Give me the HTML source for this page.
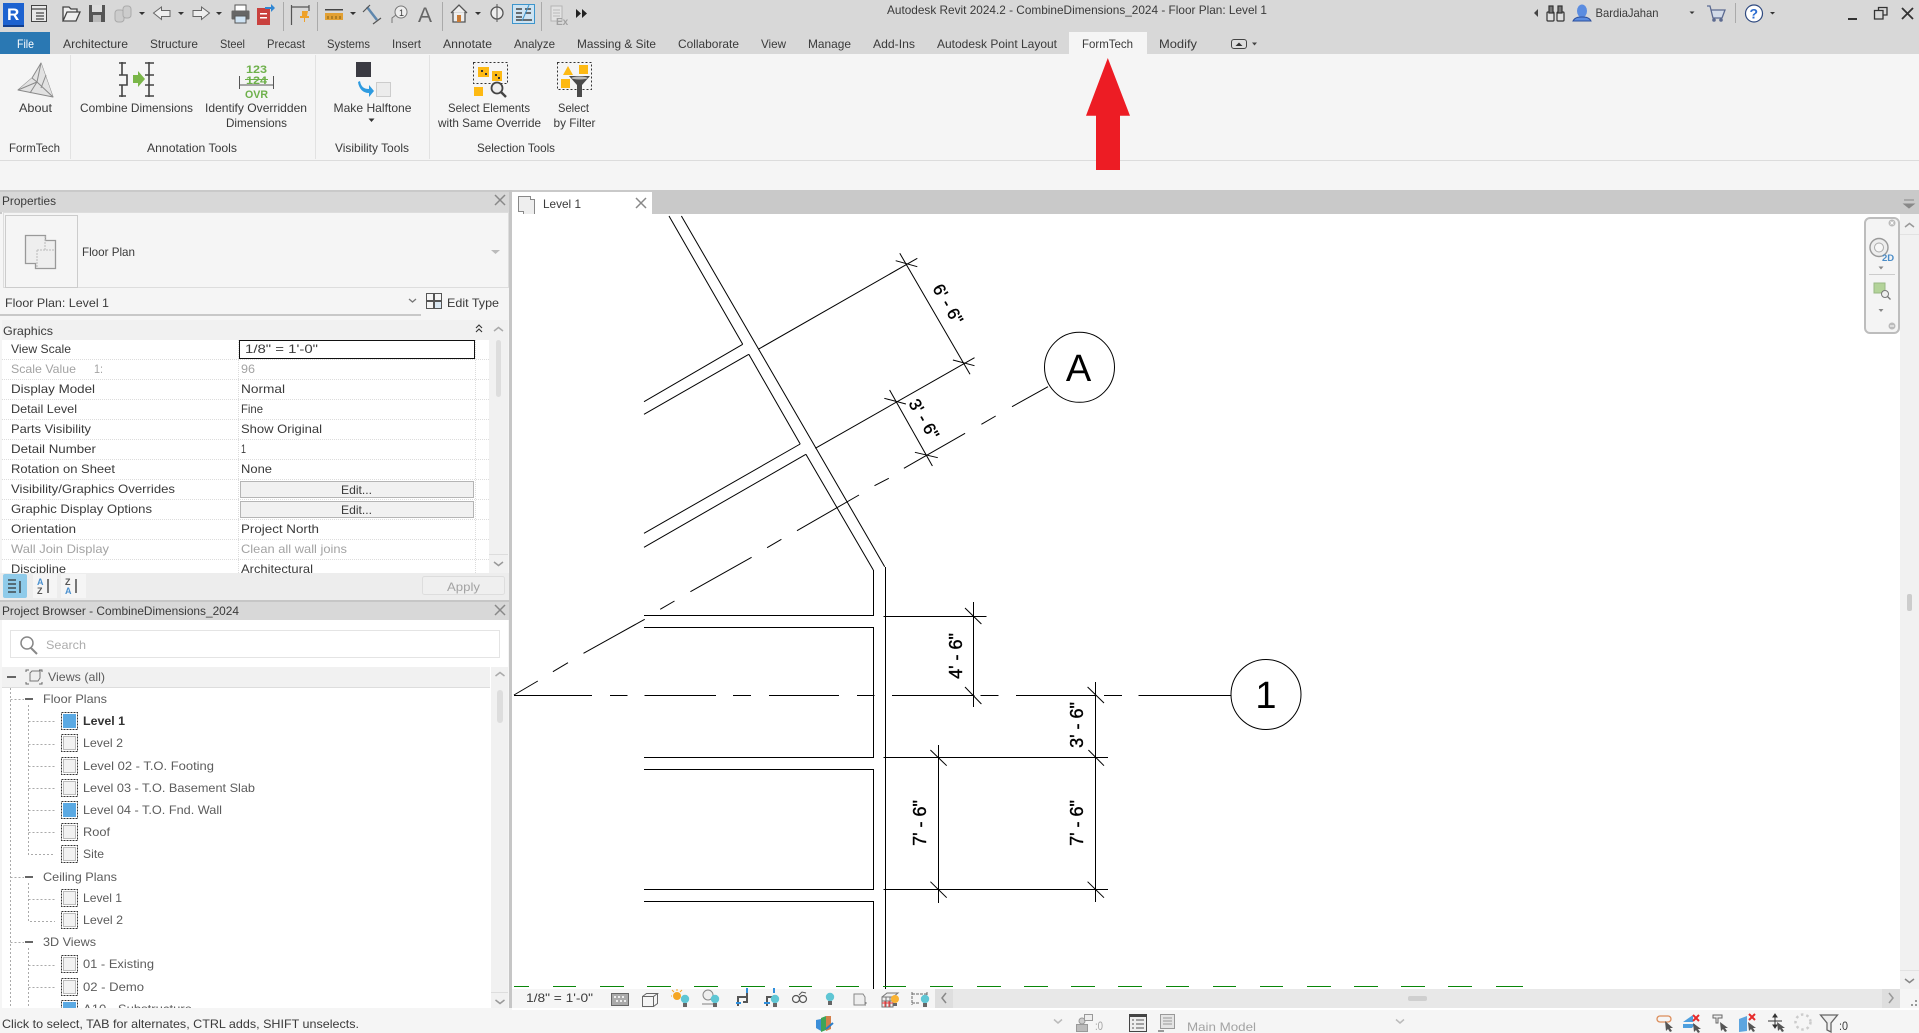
<!DOCTYPE html>
<html><head><meta charset="utf-8"><title>Autodesk Revit 2024.2</title>
<style>
html,body{margin:0;padding:0;background:#fff;overflow:hidden}
svg{display:block}
text{font-family:"Liberation Sans",sans-serif;font-size:12px;fill:#3a3a3a}
.g{fill:#a3a3a3}
.b{fill:#5c5c5c}
.d{font-size:18px;fill:#000;stroke:#000;stroke-width:.4}
.cad line,.cad polyline{stroke:#000;stroke-width:1;fill:none}
.o{shape-rendering:crispEdges}
.dot{stroke:#dcdcdc;stroke-width:1;stroke-dasharray:1 1;shape-rendering:crispEdges}
.tree{stroke:#aaa;stroke-width:1;stroke-dasharray:2 2;fill:none;shape-rendering:crispEdges}
</style></head><body>
<svg xmlns="http://www.w3.org/2000/svg" width="1919" height="1033" viewBox="0 0 1919 1033">
<defs>
<g id="tg" shape-rendering="crispEdges"><rect x="61.5" y="-8.5" width="16" height="17" fill="none" stroke="#333" stroke-dasharray="2 1"/><rect x="63.5" y="-6.5" width="12" height="13" fill="#f2f2f2" stroke="#bbb"/></g>
<g id="tb" shape-rendering="crispEdges"><rect x="61.5" y="-8.5" width="16" height="17" fill="none" stroke="#333" stroke-dasharray="2 1"/><rect x="63" y="-7" width="13" height="14" fill="#5aa9e3"/></g>
<g id="bulb"><circle cx="0" cy="0" r="4.2" fill="#5fc6d4"/><rect x="-2" y="4" width="4" height="4" fill="#666"/></g>
<g id="x"><path d="M-5-5L5 5M5-5L-5 5" stroke="#888" stroke-width="1.5" fill="none"/></g>
</defs>

<!-- base -->
<rect width="1919" height="1033" fill="#f5f5f5"/>
<rect width="1919" height="54" fill="#d8d8d8"/>
<rect y="160" width="1919" height="1" fill="#dcdcdc"/>
<rect y="190" width="1919" height="24" fill="#c9c9c9"/>
<rect x="0" y="190" width="512" height="3" fill="#c9c9c9"/>

<!-- title bar -->
<text x="887" y="14" textLength="380" lengthAdjust="spacingAndGlyphs">Autodesk Revit 2024.2 - CombineDimensions_2024 - Floor Plan: Level 1</text>
<rect x="3" y="24" width="21" height="3" fill="#123f8f"/>
<rect x="3" y="3" width="21" height="22" fill="#1d62d0"/>
<text x="7" y="20" style="font-size:17px;font-weight:bold;fill:#fff">R</text>
<g fill="none" stroke="#444">
<rect x="31.5" y="5.5" width="15" height="16" fill="#e8e8e8"/><path d="M32 9h14M36 13h8M36 16h8M36 19h8" stroke-width="1.2"/>
<path d="M63 21V7h6l2 2h6v3M63 21l4-9h13l-4 9z" fill="#efefef" stroke-width="1.3"/>
</g>
<rect x="89" y="5" width="16" height="17" fill="#555"/><rect x="92" y="5" width="10" height="7" fill="#ddd"/><rect x="93" y="15" width="8" height="7" fill="#bbb"/>
<g fill="#ccc" stroke="#aaa"><rect x="115" y="10" width="9" height="12" rx="3"/><rect x="123" y="6" width="8" height="12" rx="3"/></g>
<path d="M139 12h6l-3 3zM178 12h6l-3 3zM216 12h6l-3 3zM350 12h6l-3 3zM475 12h6l-3 3z" fill="#333"/>
<path d="M153.500 13l8-6v3.500h8.500v6H161.500v3z" fill="#eee" stroke="#666"/>
<path d="M209.500 13l-8-6v3.500H193v6h8.500v3z" fill="#eee" stroke="#666"/>
<rect x="235" y="5" width="11" height="6" fill="#fff" stroke="#555"/><rect x="231.500" y="10.500" width="18" height="9" rx="1" fill="#666"/><rect x="235" y="16" width="11" height="7" fill="#cfe3f3" stroke="#555"/>
<rect x="257" y="8" width="13" height="17" fill="#c9413e"/><rect x="260" y="13" width="7" height="1.500" fill="#fff"/><rect x="260" y="17" width="7" height="1.500" fill="#fff"/><path d="M265 7h6V4l4 4-4 4V9h-6z" fill="#2f86d3"/>
<rect x="283" y="2" width="1" height="29" fill="#aaa"/><rect x="317" y="2" width="1" height="29" fill="#aaa"/><rect x="442" y="2" width="1" height="29" fill="#aaa"/><rect x="541" y="2" width="1" height="29" fill="#aaa"/>
<path d="M291.500 5v20M309 5v6M291 7h18" stroke="#555" stroke-width="1.200" fill="none"/><path d="M302 11h6l-1 5h2v2h-4v4h-1v-4h-4v-2h2z" fill="#eea12a"/>
<rect x="325" y="9" width="18" height="1.500" fill="#444"/><rect x="325" y="13" width="18" height="7" fill="#e2a033"/><path d="M328 16v3M332 16v3M336 16v3M340 16v3" stroke="#7d5b13"/>
<path d="M367 7l10 13" stroke="#5f87ad" stroke-width="2.500"/><path d="M363 12l7-7M373 24l8-6" stroke="#555" stroke-width="1.200"/>
<circle cx="401" cy="12" r="6" fill="#eee" stroke="#777"/><text x="399" y="16" style="font-size:9px">1</text><path d="M392 23v-5l4-3" stroke="#777" fill="none"/>
<text x="418" y="22" textLength="14" lengthAdjust="spacingAndGlyphs" style="font-size:21px;fill:#666">A</text>
<path d="M451 13l8-8 8 8M453 12v10h12V12" fill="#eee" stroke="#555" stroke-width="1.300"/><rect x="457" y="15" width="4" height="7" fill="#c87a35"/>
<circle cx="497" cy="13" r="6" fill="#eee" stroke="#555" stroke-width="1.300"/><path d="M497 4v18" stroke="#555"/>
<rect x="512.500" y="4.500" width="22" height="19" fill="#cde3f2" stroke="#3d95cc"/><path d="M516 9h6M516 13h6M516 17h6M516 20h16M525 9h6M525 13h6" stroke="#444" stroke-width="1.500"/><path d="M522 21l7-16" stroke="#3d95cc"/>
<rect x="551" y="6" width="11" height="15" fill="#e2e2e2" stroke="#b5b5b5"/><path d="M553 10h7M553 13h7M553 16h7" stroke="#bbb"/><text x="556" y="25" style="font-size:10px;fill:#a0a0a0;font-weight:bold">Ex</text>
<path d="M576 9l5 4.500-5 4.500zM582 9l5 4.500-5 4.500z" fill="#222"/>

<path d="M1538 9v8l-4-4z" fill="#444"/>
<g fill="#dfdfdf" stroke="#333" stroke-width="1.200"><rect x="1547" y="12" width="7" height="9" rx="1"/><rect x="1557" y="12" width="7" height="9" rx="1"/><rect x="1549" y="6" width="4" height="7" fill="#777"/><rect x="1558" y="6" width="4" height="7" fill="#777"/></g>
<ellipse cx="1582" cy="11" rx="5" ry="6.500" fill="#5b8ce0"/><path d="M1573 21c2-4 6-4 9-4s7 0 9 4z" fill="#5b8ce0" stroke="#2c4f9c"/>
<text x="1595.500" y="17" textLength="63" lengthAdjust="spacingAndGlyphs">BardiaJahan</text>
<path d="M1689.500 11.500h5l-2.500 2.500zM1770 12h5l-2.500 2.500z" fill="#333"/>
<path d="M1707 6h3l3 12h9l3-8h-14" fill="#d3dbe8" stroke="#5c6a90" stroke-width="1.300"/><circle cx="1714" cy="20" r="1.800" fill="#5c6a90"/><circle cx="1721" cy="20" r="1.800" fill="#5c6a90"/>
<rect x="1735" y="3" width="1" height="20" fill="#aaa"/>
<circle cx="1754" cy="13.500" r="8.500" fill="#fff" stroke="#2f4a80" stroke-width="1.200"/><text x="1749.500" y="18.500" style="font-size:14px;font-weight:bold;fill:#2b6cd0">?</text>
<rect x="1848" y="18" width="9" height="2" fill="#333"/>
<path d="M1878.500 10V7.500h8.500v7.500H1883M1874.500 10.500h8.500v8.500h-8.500z" fill="none" stroke="#333" stroke-width="1.300"/>
<path d="M1902 8l11 11M1913 8l-11 11" stroke="#333" stroke-width="1.800"/>

<!-- tabs -->
<rect y="32" width="50" height="22" fill="#2a78b3"/>
<text x="17" y="48" textLength="17" lengthAdjust="spacingAndGlyphs" style="fill:#fff">File</text>
<rect x="1069" y="32" width="78" height="22" fill="#f5f5f5"/>
<g>
<text x="63" y="48" textLength="65" lengthAdjust="spacingAndGlyphs">Architecture</text>
<text x="150" y="48" textLength="48" lengthAdjust="spacingAndGlyphs">Structure</text>
<text x="220" y="48" textLength="25" lengthAdjust="spacingAndGlyphs">Steel</text>
<text x="267" y="48" textLength="38" lengthAdjust="spacingAndGlyphs">Precast</text>
<text x="327" y="48" textLength="43" lengthAdjust="spacingAndGlyphs">Systems</text>
<text x="392" y="48" textLength="29" lengthAdjust="spacingAndGlyphs">Insert</text>
<text x="443" y="48" textLength="49" lengthAdjust="spacingAndGlyphs">Annotate</text>
<text x="514" y="48" textLength="41" lengthAdjust="spacingAndGlyphs">Analyze</text>
<text x="577" y="48" textLength="79" lengthAdjust="spacingAndGlyphs">Massing &amp; Site</text>
<text x="678" y="48" textLength="61" lengthAdjust="spacingAndGlyphs">Collaborate</text>
<text x="761" y="48" textLength="25" lengthAdjust="spacingAndGlyphs">View</text>
<text x="808" y="48" textLength="43" lengthAdjust="spacingAndGlyphs">Manage</text>
<text x="873" y="48" textLength="42" lengthAdjust="spacingAndGlyphs">Add-Ins</text>
<text x="937" y="48" textLength="120" lengthAdjust="spacingAndGlyphs">Autodesk Point Layout</text>
<text x="1082" y="48" textLength="51" lengthAdjust="spacingAndGlyphs">FormTech</text>
<text x="1159" y="48" textLength="38" lengthAdjust="spacingAndGlyphs">Modify</text>
</g>
<rect x="1231.500" y="39.500" width="15" height="9" rx="2.500" fill="#ddd" stroke="#444"/><path d="M1235.500 46l3.500-3.500 3.500 3.500z" fill="#333"/><path d="M1252 42.500h5l-2.500 3z" fill="#444"/>

<!-- ribbon panel separators -->
<g fill="#e2e2e2"><rect x="70" y="55" width="1" height="104"/><rect x="315" y="55" width="1" height="104"/><rect x="429" y="55" width="1" height="104"/></g>
<!-- ribbon text -->
<text x="19" y="112" textLength="33" lengthAdjust="spacingAndGlyphs">About</text>
<text x="80" y="112" textLength="113" lengthAdjust="spacingAndGlyphs">Combine Dimensions</text>
<text x="205" y="112" textLength="102" lengthAdjust="spacingAndGlyphs">Identify Overridden</text>
<text x="226" y="127" textLength="61" lengthAdjust="spacingAndGlyphs">Dimensions</text>
<text x="333.500" y="112" textLength="78" lengthAdjust="spacingAndGlyphs">Make Halftone</text>
<text x="448" y="112" textLength="82" lengthAdjust="spacingAndGlyphs">Select Elements</text>
<text x="438" y="127" textLength="103" lengthAdjust="spacingAndGlyphs">with Same Override</text>
<text x="558" y="112" textLength="31" lengthAdjust="spacingAndGlyphs">Select</text>
<text x="553.500" y="127" textLength="42" lengthAdjust="spacingAndGlyphs">by Filter</text>
<text x="9" y="152" textLength="51" lengthAdjust="spacingAndGlyphs">FormTech</text>
<text x="147" y="152" textLength="90" lengthAdjust="spacingAndGlyphs">Annotation Tools</text>
<text x="335" y="152" textLength="74" lengthAdjust="spacingAndGlyphs">Visibility Tools</text>
<text x="477" y="152" textLength="78" lengthAdjust="spacingAndGlyphs">Selection Tools</text>
<path d="M368.500 118.500h6l-3 3.500z" fill="#333"/>

<!-- ribbon icons -->
<g fill="#e2e2e2" stroke="#8a8a8a" stroke-linejoin="round">
<path d="M41 63L32 78 18 90 53 97z"/><path d="M41 63L37 82 53 97M32 78L37 82 18 90M37 82L30 93M46 75L41 88"/>
</g>
<g stroke="#444" stroke-width="1.600" fill="none">
<path d="M122 62v13h5v10h-5v12M119 63h7M119 96h7M119 75h7M119 85h7"/>
<path d="M149 62v35M145 63h9M145 75h9M145 85h9M145 96h9"/>
</g>
<path d="M133 75h5v-4l7 8-7 8v-4h-5z" fill="#7ab648"/>
<text x="246" y="73" textLength="21" lengthAdjust="spacingAndGlyphs" style="font-size:11px;font-weight:bold;fill:#6db04a">123</text>
<text x="246" y="84" textLength="21" lengthAdjust="spacingAndGlyphs" style="font-size:11px;font-weight:bold;fill:#6db04a">124</text>
<rect x="245" y="79" width="23" height="1" fill="#6db04a"/>
<path d="M239.500 76v13M273.500 76v13M240 85h33" stroke="#555" fill="none"/>
<text x="245" y="98" textLength="23" lengthAdjust="spacingAndGlyphs" style="font-size:11px;font-weight:bold;fill:#6db04a">OVR</text>
<rect x="356" y="62" width="15" height="15" fill="#3a3a42"/>
<rect x="376.500" y="82.500" width="14" height="14" fill="#ececec" stroke="#ccc"/>
<path d="M360 81c1 6 4 8 9 8v-4l5 6-5 6v-4c-6 0-10-4-11-11z" fill="#2e9be0"/>
<rect x="473.500" y="62.500" width="34" height="21" fill="none" stroke="#333" stroke-dasharray="2 2"/>
<rect x="478" y="67" width="11" height="10" fill="#fdb913"/><rect x="492" y="71" width="10" height="10" fill="#fdb913"/><path d="M481 70h2v2h-2zM485 73h2v2h-2zM495 74h2v2h-2zM498 77h2v2h-2z" fill="#333"/>
<rect x="474" y="87" width="9" height="9" fill="#fdb913"/>
<circle cx="497" cy="88" r="5.500" fill="#eee" stroke="#444" stroke-width="1.800"/><path d="M501 92l5 5" stroke="#444" stroke-width="2.400"/>
<rect x="557.500" y="62.500" width="34" height="27" fill="none" stroke="#333" stroke-dasharray="2 2"/>
<path d="M563 75l5-9 5 9z" fill="#fdb913"/><rect x="579" y="65" width="9" height="9" fill="#fdb913"/><rect x="561" y="79" width="9" height="9" fill="#fdb913"/>
<path d="M569 76h21l-8 9v12h-5V85z" fill="#4a4a4a"/><ellipse cx="579.500" cy="78" rx="8" ry="1.500" fill="#bbb"/>
<!-- red arrow -->
<path d="M1107.800 58L1130 115.700H1120V170H1096V115.700H1086z" fill="#ed1c24"/>

<!-- Properties panel -->
<rect x="0" y="192" width="509" height="20" fill="#d8d8d8"/>
<rect x="509" y="190" width="3" height="820" fill="#c6c6c6"/>
<text x="2" y="205" textLength="54" lengthAdjust="spacingAndGlyphs">Properties</text>
<use href="#x" x="500" y="200"/>
<rect x="2" y="212" width="506" height="108" fill="#f5f5f5"/>
<rect x="3.500" y="212.500" width="505" height="75" fill="none" stroke="#ddd"/>
<rect x="5.500" y="215.500" width="72" height="72" fill="#f5f5f5" stroke="#ccc"/>
<path d="M25.500 235.500h20v5h10v28h-20v-5h-10z" fill="#eee" stroke="#999" stroke-width="1.300"/><path d="M37 250h18M37 250v18M45 236v14" stroke="#bbb" stroke-dasharray="2 1"/>
<text x="82" y="256" textLength="53" lengthAdjust="spacingAndGlyphs">Floor Plan</text>
<path d="M491 250h9l-4.500 4z" fill="#bbb"/>
<text x="5" y="307" textLength="104" lengthAdjust="spacingAndGlyphs">Floor Plan: Level 1</text>
<path d="M409 299l3.500 3 3.500-3" stroke="#777" fill="none" stroke-width="1.300"/>
<g fill="none" stroke="#555"><rect x="426.500" y="293.500" width="7" height="7"/><rect x="434.500" y="293.500" width="7" height="7"/><rect x="426.500" y="301.500" width="7" height="7"/><rect x="434.500" y="301.500" width="7" height="7" fill="#dbe8f3"/></g>
<text x="447" y="307" textLength="52" lengthAdjust="spacingAndGlyphs">Edit Type</text>
<rect x="0" y="314" width="421" height="2" fill="#c8c8c8"/>
<rect x="2" y="320" width="487" height="20" fill="#f1f1f1"/>
<text x="3" y="335" textLength="50" lengthAdjust="spacingAndGlyphs">Graphics</text>
<path d="M476 328l3-3 3 3M476 332l3-3 3 3" stroke="#333" fill="none" stroke-width="1.100"/>
<rect x="2" y="340" width="487" height="233" fill="#fff"/>
<g class="dot">
<path d="M2 359.500H489M2 379.500H489M2 399.500H489M2 419.500H489M2 439.500H489M2 459.500H489M2 479.500H489M2 499.500H489M2 519.500H489M2 539.500H489M2 559.500H489"/>
<path d="M238.500 340V573M475.500 340V573"/>
</g>
<rect x="239.500" y="340.500" width="235" height="18" fill="#fff" stroke="#111" stroke-width="1"/>
<text x="245" y="353" textLength="73" lengthAdjust="spacingAndGlyphs">1/8" = 1'-0"</text>
<text x="11" y="353" textLength="60" lengthAdjust="spacingAndGlyphs">View Scale</text>
<text class="g" x="11" y="373" textLength="65" lengthAdjust="spacingAndGlyphs">Scale Value</text><text class="g" x="94" y="373" textLength="9" lengthAdjust="spacingAndGlyphs">1:</text>
<text class="g" x="241" y="373" textLength="14" lengthAdjust="spacingAndGlyphs">96</text>
<text x="11" y="393" textLength="84" lengthAdjust="spacingAndGlyphs">Display Model</text><text x="241" y="393" textLength="44" lengthAdjust="spacingAndGlyphs">Normal</text>
<text x="11" y="413" textLength="66" lengthAdjust="spacingAndGlyphs">Detail Level</text><text x="241" y="413" textLength="22" lengthAdjust="spacingAndGlyphs">Fine</text>
<text x="11" y="433" textLength="80" lengthAdjust="spacingAndGlyphs">Parts Visibility</text><text x="241" y="433" textLength="81" lengthAdjust="spacingAndGlyphs">Show Original</text>
<text x="11" y="453" textLength="85" lengthAdjust="spacingAndGlyphs">Detail Number</text><text x="241" y="453" textLength="5" lengthAdjust="spacingAndGlyphs">1</text>
<text x="11" y="473" textLength="104" lengthAdjust="spacingAndGlyphs">Rotation on Sheet</text><text x="241" y="473" textLength="31" lengthAdjust="spacingAndGlyphs">None</text>
<text x="11" y="493" textLength="164" lengthAdjust="spacingAndGlyphs">Visibility/Graphics Overrides</text>
<rect x="240.500" y="481.500" width="233" height="16" fill="#f1f1f1" stroke="#b5b5b5"/><text x="341" y="494" textLength="31" lengthAdjust="spacingAndGlyphs">Edit...</text>
<text x="11" y="513" textLength="141" lengthAdjust="spacingAndGlyphs">Graphic Display Options</text>
<rect x="240.500" y="501.500" width="233" height="16" fill="#f1f1f1" stroke="#b5b5b5"/><text x="341" y="514" textLength="31" lengthAdjust="spacingAndGlyphs">Edit...</text>
<text x="11" y="533" textLength="65" lengthAdjust="spacingAndGlyphs">Orientation</text><text x="241" y="533" textLength="78" lengthAdjust="spacingAndGlyphs">Project North</text>
<text class="g" x="11" y="553" textLength="98" lengthAdjust="spacingAndGlyphs">Wall Join Display</text><text class="g" x="241" y="553" textLength="106" lengthAdjust="spacingAndGlyphs">Clean all wall joins</text>
<text x="11" y="573" textLength="55" lengthAdjust="spacingAndGlyphs">Discipline</text><text x="241" y="573" textLength="72" lengthAdjust="spacingAndGlyphs">Architectural</text>
<!-- props scrollbar -->
<rect x="489" y="320" width="19" height="253" fill="#f1f1f1"/>
<path d="M494 331l4.500-3.500 4.500 3.500" stroke="#aaa" fill="none" stroke-width="1.500"/>
<rect x="496" y="340" width="5" height="57" rx="2.500" fill="#ddd"/>
<rect x="489" y="554" width="19" height="1" fill="#ddd"/>
<path d="M494 562l4.500 3.500 4.500-3.500" stroke="#999" fill="none" stroke-width="1.500"/>
<!-- props toolbar -->
<rect x="0" y="573" width="509" height="27" fill="#ededed"/>
<rect x="3" y="574" width="24" height="24" rx="2" fill="#8fcbea"/>
<rect x="33" y="574" width="24" height="24" fill="#f5f5f5"/><rect x="61" y="574" width="25" height="24" fill="#f5f5f5"/>
<path d="M8 580h8M8 584h8M8 588h8M8 592h8M20 581v12" stroke="#333" stroke-width="1.300" fill="none"/>
<text x="37" y="585" style="font-size:9px;fill:#4a90cf;font-weight:bold">A</text><text x="37" y="594" style="font-size:9px;fill:#555;font-weight:bold">Z</text><path d="M48 579v14" stroke="#333" stroke-width="1.300"/>
<text x="65" y="585" style="font-size:9px;fill:#555;font-weight:bold">Z</text><text x="65" y="594" style="font-size:9px;fill:#4a90cf;font-weight:bold">A</text><path d="M76 579v14" stroke="#333" stroke-width="1.300"/>
<rect x="422.500" y="576.500" width="82" height="18" rx="2" fill="#efefef" stroke="#ddd"/>
<text x="447" y="591" textLength="33" lengthAdjust="spacingAndGlyphs" class="g">Apply</text>
<rect x="0" y="600" width="509" height="2" fill="#c6c6c6"/>

<!-- Project Browser -->
<rect x="0" y="602" width="509" height="18" fill="#d8d8d8"/>
<text x="2" y="615" textLength="237" lengthAdjust="spacingAndGlyphs">Project Browser - CombineDimensions_2024</text>
<use href="#x" x="500" y="610"/>
<rect x="2" y="620" width="506" height="388" fill="#fff"/>
<rect x="10.500" y="630.500" width="489" height="27" fill="#fff" stroke="#e4e4e4"/>
<circle cx="27" cy="643" r="6" fill="none" stroke="#888" stroke-width="1.500"/><path d="M31 648l6 6" stroke="#888" stroke-width="2"/>
<text x="46" y="649" textLength="40" lengthAdjust="spacingAndGlyphs" style="fill:#adadad">Search</text>
<rect x="2" y="667" width="488" height="20" fill="#f1f1f1"/><rect x="2" y="687" width="488" height="1" fill="#ddd"/>
<rect x="7" y="676" width="9" height="2" fill="#666"/>
<path d="M26 672v-2h3M39 670h3v2M26 682v2h3M39 684h3v-2" stroke="#666" fill="none"/><path d="M30 673l2-2h8v7l-2 3h-8z" fill="#eee" stroke="#777"/>
<text class="b" x="48" y="681" textLength="57" lengthAdjust="spacingAndGlyphs">Views (all)</text>
<g class="tree">
<path d="M10.500 688V1008"/>
<path d="M10.500 699.500H24M10.500 877.500H24M10.500 942.500H24"/>
<path d="M28.500 705V854.500H55M28.500 721.500H55M28.500 744.500H55M28.500 766.500H55M28.500 788.500H55M28.500 810.500H55M28.500 832.500H55"/>
<path d="M28.500 883V921.500H55M28.500 899.500H55"/>
<path d="M28.500 948V1008M28.500 965.500H55M28.500 987.500H55"/>
</g>
<rect x="25" y="698" width="8" height="2" fill="#666"/><rect x="25" y="876" width="8" height="2" fill="#666"/><rect x="25" y="941" width="8" height="2" fill="#666"/>
<text class="b" x="43" y="703" textLength="64" lengthAdjust="spacingAndGlyphs">Floor Plans</text>
<use href="#tb" y="721"/><text x="83" y="725" textLength="42" lengthAdjust="spacingAndGlyphs" style="font-weight:bold;fill:#333">Level 1</text>
<use href="#tg" y="743"/><text class="b" x="83" y="747" textLength="40" lengthAdjust="spacingAndGlyphs">Level 2</text>
<use href="#tg" y="766"/><text class="b" x="83" y="770" textLength="131" lengthAdjust="spacingAndGlyphs">Level 02 - T.O. Footing</text>
<use href="#tg" y="788"/><text class="b" x="83" y="792" textLength="172" lengthAdjust="spacingAndGlyphs">Level 03 - T.O. Basement Slab</text>
<use href="#tb" y="810"/><text class="b" x="83" y="814" textLength="139" lengthAdjust="spacingAndGlyphs">Level 04 - T.O. Fnd. Wall</text>
<use href="#tg" y="832"/><text class="b" x="83" y="836" textLength="27" lengthAdjust="spacingAndGlyphs">Roof</text>
<use href="#tg" y="854"/><text class="b" x="83" y="858" textLength="21" lengthAdjust="spacingAndGlyphs">Site</text>
<text class="b" x="43" y="881" textLength="74" lengthAdjust="spacingAndGlyphs">Ceiling Plans</text>
<use href="#tg" y="898"/><text class="b" x="83" y="902" textLength="39" lengthAdjust="spacingAndGlyphs">Level 1</text>
<use href="#tg" y="920"/><text class="b" x="83" y="924" textLength="40" lengthAdjust="spacingAndGlyphs">Level 2</text>
<text class="b" x="43" y="946" textLength="53" lengthAdjust="spacingAndGlyphs">3D Views</text>
<use href="#tg" y="964"/><text class="b" x="83" y="968" textLength="71" lengthAdjust="spacingAndGlyphs">01 - Existing</text>
<use href="#tg" y="987"/><text class="b" x="83" y="991" textLength="61" lengthAdjust="spacingAndGlyphs">02 - Demo</text>
<use href="#tb" y="1009"/><text class="b" x="83" y="1013" textLength="109" lengthAdjust="spacingAndGlyphs">A10 - Substructure</text>
<rect x="491" y="667" width="17" height="341" fill="#f1f1f1"/>
<path d="M495.500 676l4.500-3.500 4.500 3.500" stroke="#aaa" fill="none" stroke-width="1.500"/>
<rect x="497" y="690" width="6" height="33" rx="3" fill="#ddd"/>
<rect x="491" y="992" width="17" height="1" fill="#ddd"/>
<path d="M495.500 1000l4.500 3.500 4.500-3.500" stroke="#999" fill="none" stroke-width="1.500"/>
<!-- status bar -->
<rect x="0" y="1008" width="1919" height="25" fill="#f5f5f5"/>
<text x="2" y="1028" textLength="357" lengthAdjust="spacingAndGlyphs">Click to select, TAB for alternates, CTRL adds, SHIFT unselects.</text>

<!-- view tab -->
<rect x="512" y="192" width="140" height="22" fill="#fff"/>
<path d="M518.500 196.500h12v3h4v15h-11v-3h-5z" fill="#eee" stroke="#888"/>
<text x="543" y="208" textLength="38" lengthAdjust="spacingAndGlyphs">Level 1</text>
<use href="#x" x="641" y="203"/>
<path d="M1904 200h10M1904 204h10l-5 4z" fill="#888" stroke="#888"/>

<!-- canvas -->
<rect x="512" y="214" width="1388" height="775" fill="#fff"/>
<g class="cad">
<!-- diagonal walls -->
<line x1="669" y1="216" x2="742.700" y2="344.300"/>
<line x1="742.700" y1="344.300" x2="644" y2="401.700"/>
<line x1="748.800" y1="354.300" x2="644" y2="414.300"/>
<line x1="748.800" y1="354.300" x2="800.200" y2="444"/>
<line x1="800.200" y1="444" x2="644" y2="533.300"/>
<line x1="805.900" y1="454.300" x2="644" y2="547.300"/>
<line x1="805.900" y1="454.300" x2="873.300" y2="570"/>
<line x1="681.400" y1="216" x2="884.700" y2="566.700"/>
<!-- dims diagonal -->
<line x1="758.200" y1="349.300" x2="917.300" y2="258.300"/>
<line x1="899.800" y1="253.300" x2="970" y2="374.300"/>
<line x1="895.700" y1="260.700" x2="917.300" y2="266.700"/>
<line x1="815.300" y1="448.300" x2="974.500" y2="357.700"/>
<line x1="952.900" y1="360" x2="974.500" y2="365.700"/>
<line x1="889.600" y1="390" x2="932.400" y2="466"/>
<line x1="884.300" y1="398.300" x2="905.900" y2="404"/>
<line x1="914.900" y1="452.300" x2="937.800" y2="457.700"/>
<!-- grid A -->
<line x1="1048" y1="386.700" x2="1012" y2="406.700"/>
<line x1="995.700" y1="416" x2="981.400" y2="424.300"/>
<line x1="965.100" y1="433.300" x2="903.900" y2="468.300"/>
<line x1="888.800" y1="478.300" x2="874.500" y2="485.700"/>
<line x1="859" y1="495" x2="797" y2="530.700"/>
<line x1="781.400" y1="539.300" x2="767.100" y2="547.700"/>
<line x1="751.600" y1="557.300" x2="690.400" y2="591.700"/>
<line x1="674.500" y1="601" x2="660.200" y2="609.300"/>
<line x1="644.700" y1="619.300" x2="583.500" y2="653.300"/>
<line x1="568" y1="662.700" x2="552.900" y2="671.700"/>
<line x1="537.800" y1="681" x2="514" y2="695"/>
<!-- slashes -->
<line x1="965" y1="608" x2="981.400" y2="624"/>
<line x1="965" y1="687" x2="981.400" y2="704"/>
<line x1="1087.600" y1="687" x2="1104" y2="703"/>
<line x1="1088.400" y1="750" x2="1104" y2="765.700"/>
<line x1="1087.600" y1="881.700" x2="1104" y2="897.700"/>
<line x1="930.400" y1="750" x2="946.700" y2="765.700"/>
<line x1="930.400" y1="881.700" x2="946.700" y2="897.700"/>
</g>
<g class="cad o">
<!-- walls -->
<polyline points="873.500,570 873.500,615.500 644,615.500"/>
<polyline points="644,627.500 873.500,627.500 873.500,757.500 644,757.500"/>
<polyline points="644,769.500 873.500,769.500 873.500,889.500 644,889.500"/>
<polyline points="644,901.500 873.500,901.500 873.500,989"/>
<line x1="885.500" y1="567" x2="885.500" y2="989"/>
<!-- grid 1 -->
<path d="M514 695.500H592M610 695.500H627.500M644.700 695.500H716M733 695.500H751M769 695.500H839M857 695.500H874.500M892 695.500H974.500M980.600 695.500H998.600M1016 695.500H1095.700M1104 695.500H1122M1138.600 695.500H1232" stroke="#000" fill="none"/>
<!-- dims ortho -->
<line x1="883.500" y1="616.500" x2="986.700" y2="616.500"/>
<line x1="973.500" y1="602" x2="973.500" y2="707"/>
<line x1="1095.500" y1="682" x2="1095.500" y2="902"/>
<line x1="938.500" y1="745" x2="938.500" y2="903"/>
<line x1="883.500" y1="757.500" x2="1108" y2="757.500"/>
<line x1="883.500" y1="889.500" x2="1108" y2="889.500"/>
</g>
<circle cx="1079.500" cy="367.300" r="35" fill="#fff" stroke="#000"/>
<text x="1078.500" y="381" text-anchor="middle" style="font-size:38px;fill:#000">A</text>
<circle cx="1266" cy="694.500" r="35" fill="#fff" stroke="#000"/>
<text x="1266" y="708" text-anchor="middle" style="font-size:38px;fill:#000">1</text>
<text class="d" text-anchor="middle" transform="translate(962,656) rotate(-90)">4' - 6"</text>
<text class="d" text-anchor="middle" transform="translate(1083,725) rotate(-90)">3' - 6"</text>
<text class="d" text-anchor="middle" transform="translate(926,823) rotate(-90)">7' - 6"</text>
<text class="d" text-anchor="middle" transform="translate(1083,823) rotate(-90)">7' - 6"</text>
<text class="d" text-anchor="middle" transform="translate(943,307) rotate(60)" style="font-size:17px">6' - 6"</text>
<text class="d" text-anchor="middle" transform="translate(919,422) rotate(60)" style="font-size:17px">3' - 6"</text>
<!-- green crop -->
<path class="o" d="M514 986.500h15M553 986.500h23M600 986.500h24M647 986.500h24M694 986.500h24M741 986.500h24M789 986.500h23M836 986.500h23M883 986.500h23M930 986.500h23M977 986.500h24M1024 986.500h24M1071 986.500h24M1118 986.500h24M1166 986.500h23M1213 986.500h23M1260 986.500h23M1307 986.500h24M1354 986.500h24M1401 986.500h24M1448 986.500h24M1496 986.500h27" stroke="#0a860a" stroke-width="1.200" fill="none"/>

<!-- nav bar -->
<rect x="1865" y="218" width="34" height="115" rx="5" fill="#f4f4f4" stroke="#bdbdbd" stroke-width="2"/>
<circle cx="1892" cy="223" r="3.500" fill="#bbb"/><path d="M1890.500 221.500l3 3M1893.500 221.500l-3 3" stroke="#fff"/>
<circle cx="1879" cy="247.500" r="9" fill="#eee" stroke="#999" stroke-width="1.400"/><circle cx="1879" cy="247.500" r="4.500" fill="#f7f7f7" stroke="#aaa"/>
<text x="1882" y="261" style="font-size:9.500px;font-weight:bold;fill:#4a8cc7">2D</text>
<path d="M1878.500 266.500h5l-2.500 3z" fill="#888"/>
<rect x="1869" y="274" width="26" height="1" fill="#ccc"/>
<rect x="1874" y="283" width="11" height="10" fill="#b3d399" stroke="#98b884"/><circle cx="1885" cy="294" r="3.500" fill="#eee" stroke="#777"/><path d="M1887.500 296.500l3 3" stroke="#777" stroke-width="1.300"/>
<path d="M1878.500 309h5l-2.500 3z" fill="#888"/>
<circle cx="1892" cy="326" r="3.500" fill="#bbb"/><rect x="1890" y="325.500" width="4" height="1" fill="#fff"/>

<!-- right scrollbar -->
<rect x="1900" y="214" width="19" height="775" fill="#f1f1f1"/>
<rect x="1900" y="234" width="19" height="1" fill="#e2e2e2"/>
<path d="M1905 227l4.500-3.500 4.500 3.500" stroke="#999" fill="none" stroke-width="1.500"/>
<rect x="1907" y="594" width="5" height="17" rx="2" fill="#ccc"/>
<rect x="1900" y="970" width="19" height="1" fill="#e2e2e2"/>
<path d="M1905 979l4.500 3.500 4.500-3.500" stroke="#888" fill="none" stroke-width="1.500"/>

<!-- view control bar -->
<rect x="514" y="989" width="421" height="19" fill="#f5f5f5"/>
<rect x="935" y="989" width="18" height="19" fill="#dedede"/>
<rect x="953" y="989" width="947" height="19" fill="#e8e8e8"/>
<rect x="1882" y="989" width="18" height="19" fill="#dedede"/>
<rect x="1900" y="989" width="19" height="19" fill="#f5f5f5"/>
<rect x="512" y="1008" width="1407" height="2" fill="#fff"/>
<path d="M946 993l-4 5 4 5" stroke="#888" fill="none" stroke-width="1.500"/>
<path d="M1889 993l4 5-4 5" stroke="#999" fill="none" stroke-width="1.500"/>
<path d="M1911 1004h2v2h-2zM1915 1000h2v2h-2zM1915 1004h2v2h-2z" fill="#999"/>
<rect x="1408" y="996" width="19" height="5" rx="2" fill="#cfcfcf"/>
<text x="526" y="1002" textLength="67" lengthAdjust="spacingAndGlyphs">1/8" = 1'-0"</text>
<rect x="611.500" y="993.500" width="17" height="12" fill="#aaa" stroke="#666"/><path d="M614 996h2v2h-2zM618 996h2v2h-2zM622 996h2v2h-2zM616 1000h2v2h-2zM620 1000h2v2h-2zM624 1000h2v2h-2z" fill="#eee"/>
<path d="M642.500 996.500h11v10h-11zM642.500 996.500l4-3h11l-4 3M653.500 1006.500l4-3v-10" fill="#f4f4f4" stroke="#666"/>
<circle cx="677" cy="996" r="4" fill="#f5a623"/><path d="M672 990l2 2M677 989v2M682 990l-2 2M671 996h1" stroke="#f5a623"/><use href="#bulb" x="685" y="999"/>
<circle cx="708" cy="995" r="5" fill="#eee" stroke="#888"/><rect x="702" y="1003" width="11" height="2" fill="#bbb"/><use href="#bulb" x="715" y="999"/>
<path d="M738 1006v-9h9M747 993v9h-4" stroke="#555" stroke-width="2" fill="none"/><path d="M741 1003h-5M747 988v5" stroke="#2f8fdc" stroke-width="2"/>
<path d="M767 1006v-9h7" stroke="#555" stroke-width="2" fill="none"/><path d="M770 1003h-6M774 988v5" stroke="#2f8fdc" stroke-width="2"/><use href="#bulb" x="775" y="999"/>
<circle cx="796" cy="999" r="3.500" fill="none" stroke="#555" stroke-width="1.200"/><circle cx="803" cy="999" r="3.500" fill="none" stroke="#555" stroke-width="1.200"/><path d="M799 995l3-3 4 1" stroke="#555" fill="none"/>
<use href="#bulb" x="830" y="997"/>
<path d="M854 994h9l2 3v8h-11z" fill="#eee" stroke="#888"/><path d="M861 1005h5v-4" stroke="#888" stroke-dasharray="2 1" fill="none"/>
<path d="M882 997h11v10h-11zM886 997v10M890 997v10M882 1001h11M882 997l5-4h11l-5 4" fill="#eee" stroke="#777"/><path d="M885 1001v6M889 1001v6M882 1003h11" stroke="#e33" fill="none"/><circle cx="895" cy="999" r="4" fill="#f9b233"/><rect x="893" y="1003" width="4" height="3" fill="#666"/>
<path d="M912 992v13M927 992v5M912 994h15M912 1003h8" stroke="#666" fill="none" stroke-dasharray="3 1"/><use href="#bulb" x="925" y="999"/>

<!-- status icons -->
<path d="M816 1020l5-1v12l-5-3z" fill="#3b8ed8"/><path d="M821 1018l5-2v14l-5 2z" fill="#3ea457"/><path d="M826 1016l5 0v13l-5 2z" fill="#d37f4a"/><path d="M826 1029l7-6" stroke="#2a7dc8" stroke-width="2"/>
<path d="M1054 1019.500l4 3.500 4-3.500M1396 1019.500l4 3.500 4-3.500" stroke="#bbb" fill="none" stroke-width="1.500"/>
<rect x="1076.500" y="1024.500" width="11" height="7" fill="#bbb" stroke="#999"/><circle cx="1082" cy="1021" r="3" fill="#ccc" stroke="#999"/><rect x="1084.500" y="1014.500" width="8" height="6" fill="#eee" stroke="#999"/>
<text x="1095" y="1030" textLength="8" lengthAdjust="spacingAndGlyphs" class="g">:0</text>
<rect x="1129" y="1014" width="18" height="18" fill="#444"/><rect x="1130" y="1017" width="16" height="14" fill="#eee"/><path d="M1132 1020h2M1136 1020h8M1132 1024h2M1136 1024h8M1132 1028h2M1136 1028h8" stroke="#555"/>
<rect x="1160.500" y="1014.500" width="14" height="14" fill="#e4e4e4" stroke="#999"/><path d="M1163 1018h9M1163 1021h9M1163 1024h9" stroke="#999"/><path d="M1158 1030h6v2h-6z" fill="#999"/>
<text x="1187" y="1031" textLength="69" lengthAdjust="spacingAndGlyphs" class="g">Main Model</text>
<path d="M1660 1016h8a3 3 0 0 1 0 6h-8a3 3 0 0 1 0-6" fill="none" stroke="#dc8d5a" stroke-width="1.300"/><path d="M1665 1021l1 10 2-2 2 3 2-1-2-3h3z" fill="#555"/>
<path d="M1683 1022l10-7v7zM1683 1024h12l-3 4h-9z" fill="#4e9fde"/><path d="M1693 1015l6 6M1699 1015l-6 6" stroke="#e62a2a" stroke-width="2"/><path d="M1693 1023l1 9 2-2 2 3 2-1-2-3h3z" fill="#555"/>
<path d="M1713 1015h9v3h-4v5h-2v-5h-3z" fill="#eee" stroke="#666"/><path d="M1720 1022l1 9 2-2 2 3 2-1-2-3h3z" fill="#555"/>
<path d="M1739 1019l8-3v15l-8 1z" fill="#5da5df"/><path d="M1749 1014l6 6M1755 1014l-6 6" stroke="#e62a2a" stroke-width="2"/><path d="M1748 1022l1 9 2-2 2 3 2-1-2-3h3z" fill="#555"/>
<path d="M1775 1014v14M1768 1021h14M1775 1014l-2 3h4zM1775 1028l-2-3h4z" stroke="#333" fill="#333"/><path d="M1777 1022l1 9 2-2 2 3 2-1-2-3h3z" fill="#555"/>
<circle cx="1803" cy="1022" r="7.500" fill="none" stroke="#ccc" stroke-width="2.500" stroke-dasharray="2.500 3"/>
<path d="M1820.500 1015h17l-6.500 8v9l-4-2v-7z" fill="#eee" stroke="#666" stroke-width="1.300"/>
<text x="1839" y="1030" textLength="9" lengthAdjust="spacingAndGlyphs">:0</text>
</svg>
</body></html>
